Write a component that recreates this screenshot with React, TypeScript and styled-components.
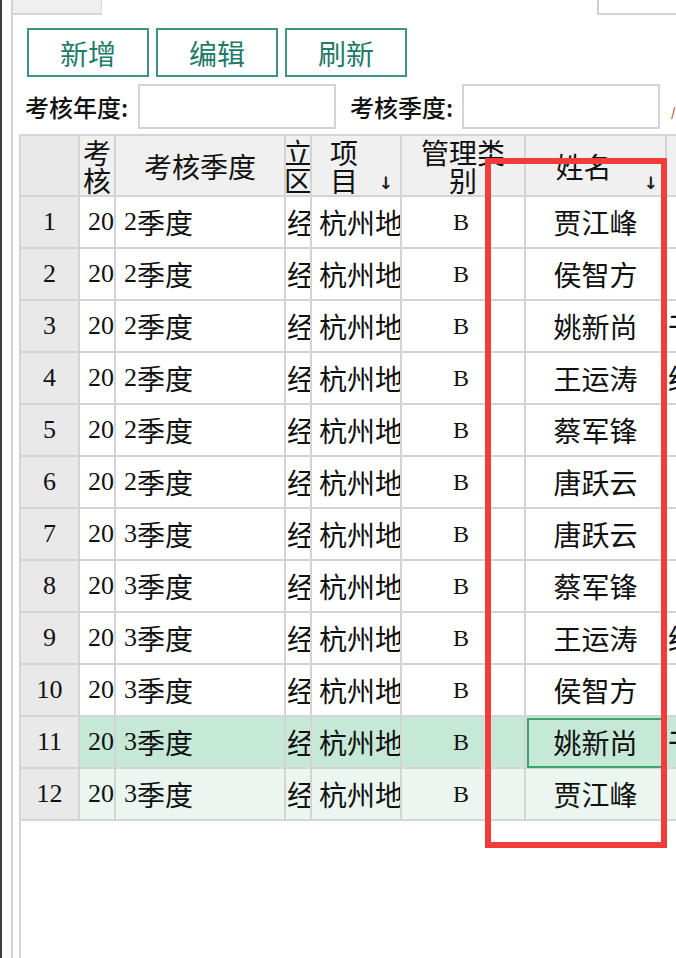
import React from 'react'
import styled, { createGlobalStyle, css } from 'styled-components'

const GlobalStyle = createGlobalStyle`
  html, body {
    margin: 0;
    padding: 0;
    background: #ffffff;
    overflow: hidden;
  }
  body {
    font-family: 'Noto Sans CJK SC', 'Noto Sans', sans-serif;
    color: #111111;
  }
`

const COLS = [59, 36, 170, 26, 90, 124, 141, 200]

type Tone = 'head' | 'plain' | 'selected' | 'hover'

const headers: { lines: string[]; sort?: boolean }[] = [
  { lines: [] },
  { lines: ['考', '核'] },
  { lines: ['考核季度'] },
  { lines: ['立', '区'] },
  { lines: ['项', '目'], sort: true },
  { lines: ['管理类', '别'] },
  { lines: ['姓名'], sort: true },
  { lines: [] },
]

const names = ['贾江峰', '侯智方', '姚新尚', '王运涛', '蔡军锋', '唐跃云', '唐跃云', '蔡军锋', '王运涛', '侯智方', '姚新尚', '贾江峰']
const extra: Record<number, string> = { 3: '干部', 4: '经理', 9: '经理', 11: '干部' }

export default function App() {
  return (
    <>
      <GlobalStyle />
      <Frame>
        <Edge />
        <Gutter />
        <Panel>
          <TopStrip>
            <TabStub />
            <Spacer />
            <RightStub />
          </TopStrip>

          <Toolbar>
            <ToolButton>新增</ToolButton>
            <ToolButton>编辑</ToolButton>
            <ToolButton>刷新</ToolButton>
          </Toolbar>

          <FilterRow>
            <Label>考核年度:</Label>
            <Field />
            <Label $gap>考核季度:</Label>
            <Field />
            <Mark>/</Mark>
          </FilterRow>

          <GridBox>
            <Grid>
              {headers.map((h, i) => (
                <HeadCell key={'h' + i} $corner={i === 0} $sort={!!h.sort}>
                  {h.lines.map((l) => (
                    <span key={l}>{l}</span>
                  ))}
                  {h.sort && <SortArrow>↓</SortArrow>}
                </HeadCell>
              ))}

              {names.map((name, idx) => {
                const n = idx + 1
                const tone: Tone = n === 11 ? 'selected' : n === 12 ? 'hover' : 'plain'
                return (
                  <React.Fragment key={n}>
                    <Cell $tone="head" $align="center">
                      <Num>{n}</Num>
                    </Cell>
                    <Cell $tone={tone} $pad={8}>
                      <Num>2020</Num>
                    </Cell>
                    <Cell $tone={tone} $pad={8}>
                      <Num>{n <= 6 ? '2' : '3'}</Num>季度
                    </Cell>
                    <Cell $tone={tone} $pad={1}>经营</Cell>
                    <Cell $tone={tone} $pad={7}>杭州地铁项目</Cell>
                    <Cell $tone={tone} $align="center">
                      <Letter>B</Letter>
                    </Cell>
                    <Cell $tone={tone} $align="center" $focused={n === 11}>
                      {name}
                    </Cell>
                    <Cell $tone={tone} $pad={1}>{extra[n] ?? ''}</Cell>
                  </React.Fragment>
                )
              })}
            </Grid>
          </GridBox>
        </Panel>

        <Annotation />
      </Frame>
    </>
  )
}

const Frame = styled.div`
  position: relative;
  display: flex;
  width: 676px;
  height: 958px;
  overflow: hidden;
  background: #ffffff;
`

const Edge = styled.div`
  width: 2px;
  flex: none;
  background: #3a3a3a;
`

const Gutter = styled.div`
  width: 9px;
  flex: none;
  background: #fbfbfb;
`

const Panel = styled.div`
  flex: 1;
  min-width: 0;
  display: flex;
  flex-direction: column;
  border-left: 2px solid #d2d2d2;
`

const TopStrip = styled.div`
  display: flex;
  height: 15px;
  flex: none;
`

const TabStub = styled.div`
  width: 89px;
  box-sizing: border-box;
  background: #efefef;
  border-right: 1px solid #d6d6d6;
  border-bottom: 2px solid #d6d6d6;
`

const Spacer = styled.div`
  flex: 1;
`

const RightStub = styled.div`
  width: 79px;
  box-sizing: border-box;
  background: #ffffff;
  border-left: 2px solid #d2d2d2;
  border-bottom: 2px solid #d2d2d2;
`

const Toolbar = styled.div`
  display: flex;
  gap: 7px;
  padding: 13px 0 0 14px;
`

const ToolButton = styled.button`
  width: 122px;
  height: 49px;
  box-sizing: border-box;
  padding: 0;
  border: 2px solid #3d9484;
  border-radius: 0;
  background: #ffffff;
  color: #1f7b69;
  font-family: 'Noto Sans CJK SC', sans-serif;
  font-size: 28px;
  line-height: 1;
`

const FilterRow = styled.div`
  display: flex;
  align-items: center;
  height: 45px;
  margin-top: 7px;
  padding-left: 12px;
  white-space: nowrap;
`

const Label = styled.span<{ $gap?: boolean }>`
  font-size: 24px;
  font-weight: 500;
  color: #111111;
  margin-left: ${(p) => (p.$gap ? '14px' : '0')};
  width: ${(p) => (p.$gap ? '107px' : '108px')};
  flex: none;
`

const Field = styled.div`
  width: 198px;
  height: 45px;
  box-sizing: border-box;
  margin-left: 5px;
  border: 2px solid #d4d4d4;
  background: #ffffff;
  flex: none;
`

const Mark = styled.span`
  margin: 10px 0 0 11px;
  font-size: 12px;
  font-weight: bold;
  color: #c8661c;
  flex: none;
`

const GridBox = styled.div`
  flex: 1;
  margin: 5px 0 0 6px;
  border-left: 2px solid #d4d4d4;
  border-top: 2px solid #d4d4d4;
  overflow: hidden;
  background: #ffffff;
`

const Grid = styled.div`
  display: grid;
  grid-template-columns: ${COLS.map((c) => c + 'px').join(' ')};
  grid-template-rows: 61px;
  grid-auto-rows: 52px;
`

const HeadCell = styled.div<{ $corner: boolean; $sort: boolean }>`
  position: relative;
  display: flex;
  flex-direction: column;
  align-items: center;
  justify-content: center;
  box-sizing: border-box;
  overflow: hidden;
  white-space: nowrap;
  padding-right: ${(p) => (p.$sort ? '24px' : '0')};
  border-right: 2px solid #d4d4d4;
  border-bottom: 2px solid #d4d4d4;
  background: ${(p) => (p.$corner ? '#e9e9e9' : '#f0f0f0')};
  font-size: 28px;
  line-height: 28px;
  color: #111111;
`

const SortArrow = styled.span`
  position: absolute;
  right: 7px;
  bottom: 3px;
  font-family: 'DejaVu Sans', sans-serif;
  font-size: 17px;
  font-weight: bold;
  line-height: 18px;
  color: #1a1a1a;
`

const toneBg: Record<Tone, string> = {
  head: '#e9e9e9',
  plain: '#ffffff',
  selected: '#c6e8d6',
  hover: '#eaf6ef',
}

const Cell = styled.div<{ $tone: Tone; $align?: 'left' | 'center'; $pad?: number; $focused?: boolean }>`
  display: flex;
  align-items: center;
  justify-content: ${(p) => (p.$align === 'center' ? 'center' : 'flex-start')};
  box-sizing: border-box;
  padding-left: ${(p) => p.$pad ?? 0}px;
  overflow: hidden;
  white-space: nowrap;
  border-right: 2px solid #d4d4d4;
  border-bottom: 2px solid #d4d4d4;
  background: ${(p) => toneBg[p.$tone]};
  font-size: 28px;
  color: #111111;
  ${(p) =>
    p.$focused &&
    css`
      outline: 2px solid #3aa46c;
      outline-offset: -3px;
    `}
`

const Num = styled.span`
  font-family: 'Liberation Serif', serif;
  font-size: 26px;
`

const Letter = styled.span`
  font-family: 'Liberation Serif', serif;
  font-size: 24px;
  margin-right: 4px;
`

const Annotation = styled.div`
  position: absolute;
  left: 485px;
  top: 158px;
  width: 182px;
  height: 690px;
  box-sizing: border-box;
  border: 6px solid #f23c3c;
  pointer-events: none;
`
